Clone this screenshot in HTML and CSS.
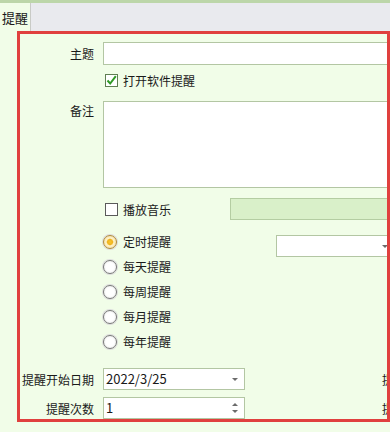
FILE: index.html
```html
<!DOCTYPE html>
<html lang="zh-CN">
<head>
  <meta charset="UTF-8" />
  <title>提醒</title>
  <link rel="stylesheet" href="styles.css">
</head>
<body>
  <div class="topline"></div>
  <div class="tabs">
    <div class="tab">提醒</div>
  </div>

  <div class="frame">
    <div class="row r-subject">
      <span class="lbl">主题</span>
      <div class="field wide"></div>
    </div>

    <div class="row r-open">
      <span class="lbl"></span>
      <span class="chk">
        <svg width="13" height="13" viewBox="0 0 13 13">
          <rect x="0.5" y="0.5" width="12" height="12" fill="#fff" stroke="#5f7f52"/>
          <path d="M2.5 6.5 L5.2 9.5 L10.8 2.2" fill="none" stroke="#2f9a25" stroke-width="2"/>
        </svg>
        打开软件提醒
      </span>
    </div>

    <div class="row r-note">
      <span class="lbl">备注</span>
      <div class="field area"></div>
    </div>

    <div class="row r-music">
      <span class="lbl"></span>
      <span class="chk">
        <svg width="13" height="13" viewBox="0 0 13 13">
          <rect x="0.5" y="0.5" width="12" height="12" fill="#fff" stroke="#5a5a5a"/>
        </svg>
        播放音乐
      </span>
      <div class="field music"></div>
    </div>

    <div class="row r-mode">
      <span class="lbl"></span>
      <ul class="radios">
        <li><span class="radio on"></span>定时提醒</li>
        <li><span class="radio"></span>每天提醒</li>
        <li><span class="radio"></span>每周提醒</li>
        <li><span class="radio"></span>每月提醒</li>
        <li><span class="radio"></span>每年提醒</li>
      </ul>
      <div class="field select"><span class="arrow"></span></div>
    </div>

    <div class="row r-date">
      <span class="lbl">提醒开始日期</span>
      <div class="field short">2022/3/25<span class="arrow"></span></div>
      <span class="lbl-right">提醒</span>
    </div>

    <div class="row r-count">
      <span class="lbl">提醒次数</span>
      <div class="field short">1<span class="spin"><i class="up"></i><i class="down"></i></span></div>
      <span class="lbl-right">提醒</span>
    </div>
  </div>
</body>
</html>
```

FILE: styles.css
```css
* {
  box-sizing: border-box;
}
body {
  margin: 0;
  width: 390px;
  height: 432px;
  overflow: hidden;
  background: #f1fde8;
  color: #1a1a1a;
  font-family: "Noto Sans CJK SC", "Noto Sans", sans-serif;
  font-size: 12px;
}

.topline {
  height: 3px;
  background: #bcd6a9;
}

.tabs {
  display: flex;
  height: 28px;
  background: #e9eaee;
}

.tab {
  width: 31px;
  padding-top: 7px;
  text-align: center;
  font-size: 13px;
  line-height: 16px;
  background: #f1fde8;
  border-right: 1px solid #c9cbc6;
}

.frame {
  margin-left: 17px;
  width: 373px;
  height: 391px;
  border: 3px solid #e0403e;
  overflow: hidden;
}

.row {
  display: flex;
  align-items: center;
  white-space: nowrap;
}
.row > * {
  flex: none;
}

.lbl {
  width: 74px;
  margin-right: 9px;
  text-align: right;
}

.field {
  position: relative;
  height: 22px;
  background: #fff;
  border: 1px solid #b3c6a3;
}

.r-subject {
  margin-top: 8px;
}
.r-subject .field {
  width: 340px;
  height: 23px;
}

.r-open {
  margin-top: 5px;
  height: 20px;
}

.chk {
  display: flex;
  align-items: center;
  gap: 5px;
  margin-left: 2px;
}

.r-note {
  margin-top: 11px;
  align-items: flex-start;
}
.r-note .lbl {
  padding-top: 1px;
}
.area {
  width: 340px;
  height: 87px;
}

.r-music {
  margin-top: 10px;
}
.r-music .chk {
  width: 125px;
}
.music {
  width: 200px;
  background: #d9f0c9;
  border-color: #b4cda2;
}

.r-mode {
  margin-top: 9px;
  align-items: flex-start;
}

.radios {
  list-style: none;
  margin: 0;
  padding: 0;
  width: 173px;
}
.radios li {
  display: flex;
  align-items: center;
  gap: 6px;
  height: 25px;
}

.radio {
  width: 14px;
  height: 14px;
  border-radius: 50%;
  border: 1px solid #777;
  background: radial-gradient(circle, #fff 45%, #e6e6e6 100%);
  box-shadow: 0 0 0 1px #dcdcdc;
}
.radio.on {
  border-color: #b08a3a;
  background: radial-gradient(circle, #f7c531 0, #f0b41e 30%, #fff2c8 45%, #e8d4a0 100%);
}

.select {
  margin-top: 6px;
  width: 130px;
}

.arrow {
  position: absolute;
  right: 6px;
  top: 9px;
  border-left: 3px solid transparent;
  border-right: 3px solid transparent;
  border-top: 3px solid #6b6b6b;
}
.select .arrow {
  right: auto;
  left: 105px;
}

.short {
  width: 142px;
  padding-left: 2px;
  line-height: 20px;
  font-size: 13px;
}

.r-date {
  margin-top: 14px;
}
.r-count {
  margin-top: 7px;
}

.spin .up,
.spin .down {
  position: absolute;
  right: 6px;
  border-left: 3px solid transparent;
  border-right: 3px solid transparent;
}
.spin .up {
  top: 5px;
  border-bottom: 3px solid #6b6b6b;
}
.spin .down {
  top: 12px;
  border-top: 3px solid #6b6b6b;
}

.lbl-right {
  margin-left: 137px;
}
```
